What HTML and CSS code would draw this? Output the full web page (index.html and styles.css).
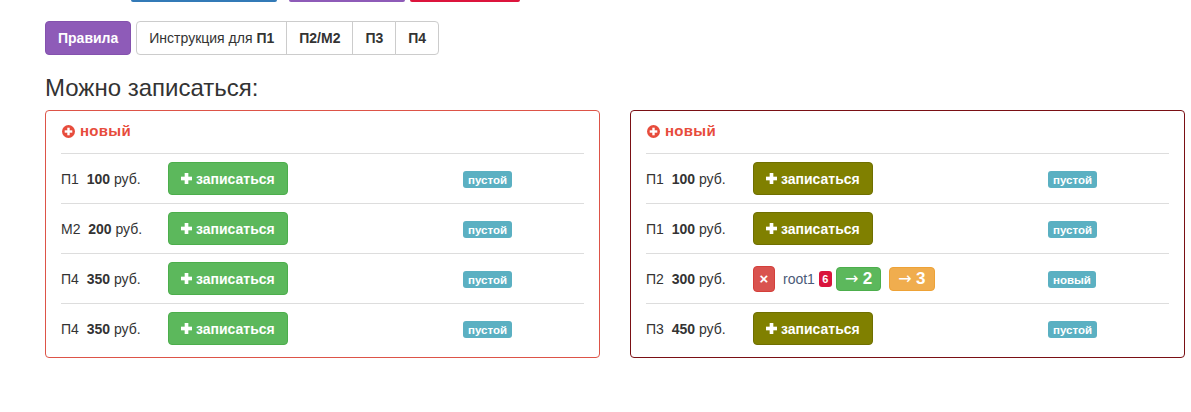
FILE: index.html
```html
<!DOCTYPE html>
<html lang="ru">
<head>
<meta charset="utf-8">
<title>Можно записаться</title>
<link rel="stylesheet" href="styles.css">
</head>
<body>
<div class="page">
  <div class="top-strip">
    <span class="strip strip-blue"></span>
    <span class="strip strip-purple"></span>
    <span class="strip strip-red"></span>
  </div>

  <div class="nav-row">
    <a class="btn btn-purple">Правила</a>
    <div class="btn-group">
      <a class="btn btn-default">Инструкция для <b>П1</b></a>
      <a class="btn btn-default"><b>П2/М2</b></a>
      <a class="btn btn-default"><b>П3</b></a>
      <a class="btn btn-default"><b>П4</b></a>
    </div>
  </div>

  <h3 class="heading">Можно записаться:</h3>

  <div class="panels">
    <div class="panel panel-light">
      <div class="panel-title">
        <svg class="icon-plus-circle" viewBox="0 0 12 12" width="13" height="13"><circle cx="6" cy="6" r="6" fill="#e74c3c"/><rect x="2.5" y="4.9" width="7" height="2.2" fill="#fff"/><rect x="4.9" y="2.5" width="2.2" height="7" fill="#fff"/></svg>
        <span>новый</span>
      </div>
      <div class="rows">
        <div class="row">
          <div class="cell-name">П1&nbsp; <b>100</b> руб.</div>
          <div class="cell-action"><a class="btn btn-success btn-join"><svg class="icon-plus" viewBox="0 0 12 12" width="11" height="11"><rect x="0" y="4" width="12" height="4" fill="#fff"/><rect x="4" y="0" width="4" height="12" fill="#fff"/></svg>записаться</a></div>
          <div class="cell-status"><span class="label">пустой</span></div>
        </div>
        <div class="row">
          <div class="cell-name">М2&nbsp; <b>200</b> руб.</div>
          <div class="cell-action"><a class="btn btn-success btn-join"><svg class="icon-plus" viewBox="0 0 12 12" width="11" height="11"><rect x="0" y="4" width="12" height="4" fill="#fff"/><rect x="4" y="0" width="4" height="12" fill="#fff"/></svg>записаться</a></div>
          <div class="cell-status"><span class="label">пустой</span></div>
        </div>
        <div class="row">
          <div class="cell-name">П4&nbsp; <b>350</b> руб.</div>
          <div class="cell-action"><a class="btn btn-success btn-join"><svg class="icon-plus" viewBox="0 0 12 12" width="11" height="11"><rect x="0" y="4" width="12" height="4" fill="#fff"/><rect x="4" y="0" width="4" height="12" fill="#fff"/></svg>записаться</a></div>
          <div class="cell-status"><span class="label">пустой</span></div>
        </div>
        <div class="row">
          <div class="cell-name">П4&nbsp; <b>350</b> руб.</div>
          <div class="cell-action"><a class="btn btn-success btn-join"><svg class="icon-plus" viewBox="0 0 12 12" width="11" height="11"><rect x="0" y="4" width="12" height="4" fill="#fff"/><rect x="4" y="0" width="4" height="12" fill="#fff"/></svg>записаться</a></div>
          <div class="cell-status"><span class="label">пустой</span></div>
        </div>
      </div>
    </div>

    <div class="panel panel-dark">
      <div class="panel-title">
        <svg class="icon-plus-circle" viewBox="0 0 12 12" width="13" height="13"><circle cx="6" cy="6" r="6" fill="#e74c3c"/><rect x="2.5" y="4.9" width="7" height="2.2" fill="#fff"/><rect x="4.9" y="2.5" width="2.2" height="7" fill="#fff"/></svg>
        <span>новый</span>
      </div>
      <div class="rows">
        <div class="row">
          <div class="cell-name">П1&nbsp; <b>100</b> руб.</div>
          <div class="cell-action"><a class="btn btn-olive btn-join"><svg class="icon-plus" viewBox="0 0 12 12" width="11" height="11"><rect x="0" y="4" width="12" height="4" fill="#fff"/><rect x="4" y="0" width="4" height="12" fill="#fff"/></svg>записаться</a></div>
          <div class="cell-status"><span class="label">пустой</span></div>
        </div>
        <div class="row">
          <div class="cell-name">П1&nbsp; <b>100</b> руб.</div>
          <div class="cell-action"><a class="btn btn-olive btn-join"><svg class="icon-plus" viewBox="0 0 12 12" width="11" height="11"><rect x="0" y="4" width="12" height="4" fill="#fff"/><rect x="4" y="0" width="4" height="12" fill="#fff"/></svg>записаться</a></div>
          <div class="cell-status"><span class="label">пустой</span></div>
        </div>
        <div class="row">
          <div class="cell-name">П2&nbsp; <b>300</b> руб.</div>
          <div class="cell-action">
            <div class="booking">
              <a class="btn btn-danger btn-remove">×</a>
              <span class="user">root1</span>
              <span class="badge">6</span>
              <a class="btn btn-success btn-move"><span class="arrow">→</span> <b>2</b></a>
              <a class="btn btn-warning btn-move btn-move-last"><span class="arrow">→</span> <b>3</b></a>
            </div>
          </div>
          <div class="cell-status"><span class="label">новый</span></div>
        </div>
        <div class="row">
          <div class="cell-name">П3&nbsp; <b>450</b> руб.</div>
          <div class="cell-action"><a class="btn btn-olive btn-join"><svg class="icon-plus" viewBox="0 0 12 12" width="11" height="11"><rect x="0" y="4" width="12" height="4" fill="#fff"/><rect x="4" y="0" width="4" height="12" fill="#fff"/></svg>записаться</a></div>
          <div class="cell-status"><span class="label">пустой</span></div>
        </div>
      </div>
    </div>
  </div>
</div>
</body>
</html>
```

FILE: styles.css
```css
* { box-sizing: border-box; }

body {
  margin: 0;
  background: #fff;
  color: #333;
  font-family: "Liberation Sans", Arial, sans-serif;
  font-size: 14px;
  line-height: 20px;
}

.page {
  padding: 0 6px 0 45px;
}

.top-strip {
  display: flex;
  height: 2px;
  padding-left: 86px;
}

.strip {
  display: block;
  height: 2px;
  border-radius: 0 0 4px 4px;
}
.strip-blue { width: 146px; background: #337ab7; }
.strip-purple { width: 116px; margin-left: 12px; background: #8e5bb8; }
.strip-red { width: 110px; margin-left: 5px; background: #dc143c; }

.nav-row {
  display: flex;
  margin-top: 19px;
  gap: 5px;
}

.btn {
  display: inline-block;
  padding: 6px 12px;
  font-size: 14px;
  line-height: 20px;
  border: 1px solid transparent;
  border-radius: 4px;
  text-decoration: none;
  white-space: nowrap;
  cursor: pointer;
}

.btn-purple {
  background: #8e5bb8;
  border-color: #8452ae;
  color: #fff;
  font-weight: bold;
}

.btn-group {
  display: flex;
}
.btn-group .btn {
  border-radius: 0;
  margin-left: -1px;
}
.btn-group .btn:first-child {
  margin-left: 0;
  border-radius: 4px 0 0 4px;
}
.btn-group .btn:last-child {
  border-radius: 0 4px 4px 0;
}

.btn-default {
  background: #fff;
  border-color: #ccc;
  color: #333;
}

.heading {
  margin: 20px 0 9px;
  font-size: 24px;
  font-weight: normal;
  line-height: 26px;
  color: #333;
}

.panels {
  display: grid;
  grid-template-columns: 555px 555px;
  column-gap: 30px;
}

.panel {
  border: 1px solid #e05a4f;
  border-radius: 4px;
  padding: 10px 15px 4px;
}
.panel-light { border-color: #dd5448; }
.panel-dark { border-color: #7a0f14; }

.panel-title {
  display: flex;
  align-items: center;
  gap: 5px;
  height: 20px;
  margin: 0 0 12px 1px;
  color: #e74c3c;
  font-weight: bold;
  font-size: 15px;
  letter-spacing: 0.3px;
}

.icon-plus-circle { display: block; }

.row {
  display: grid;
  grid-template-columns: 107px 295px 1fr;
  align-items: center;
  height: 50px;
  border-top: 1px solid #ddd;
}

.cell-name {
  white-space: nowrap;
}

.btn-join {
  display: inline-flex;
  align-items: center;
  gap: 4px;
  font-weight: bold;
  color: #fff;
  padding: 6px 12px 6px 12px;
  height: 33px;
}

.icon-plus { display: block; }

.btn-success {
  background: #5cb85c;
  border-color: #4cae4c;
  color: #fff;
}

.btn-olive {
  background: #808000;
  border-color: #6f6f00;
  color: #fff;
}

.btn-danger {
  background: #d9534f;
  border-color: #d43f3a;
  color: #fff;
}

.btn-warning {
  background: #f0ad4e;
  border-color: #eea236;
  color: #fff;
}

.label {
  display: inline-block;
  background: #5bb0c2;
  color: #fff;
  font-weight: bold;
  font-size: 11.5px;
  line-height: 12px;
  padding: 3px 5px 2px;
  border-radius: 3px;
}

.booking {
  display: flex;
  align-items: center;
}

.btn-remove {
  width: 22px;
  height: 26px;
  padding: 0;
  text-align: center;
  font-weight: bold;
  font-size: 15px;
  line-height: 24px;
}

.user {
  margin-left: 8px;
  color: #4b5a78;
}

.badge {
  display: inline-block;
  margin-left: 4px;
  width: 13px;
  height: 16px;
  background: #d9133b;
  color: #fff;
  font-size: 11px;
  font-weight: bold;
  line-height: 16px;
  text-align: center;
  border-radius: 3px;
}

.btn-move {
  margin-left: 4px;
  height: 24px;
  padding: 0 8px;
  font-size: 16px;
  line-height: 22px;
}
.btn-move .arrow {
  font-family: "DejaVu Sans", sans-serif;
  font-size: 16px;
}
.btn-move b { font-size: 17px; }
.btn-move-last { margin-left: 8px; }
```
